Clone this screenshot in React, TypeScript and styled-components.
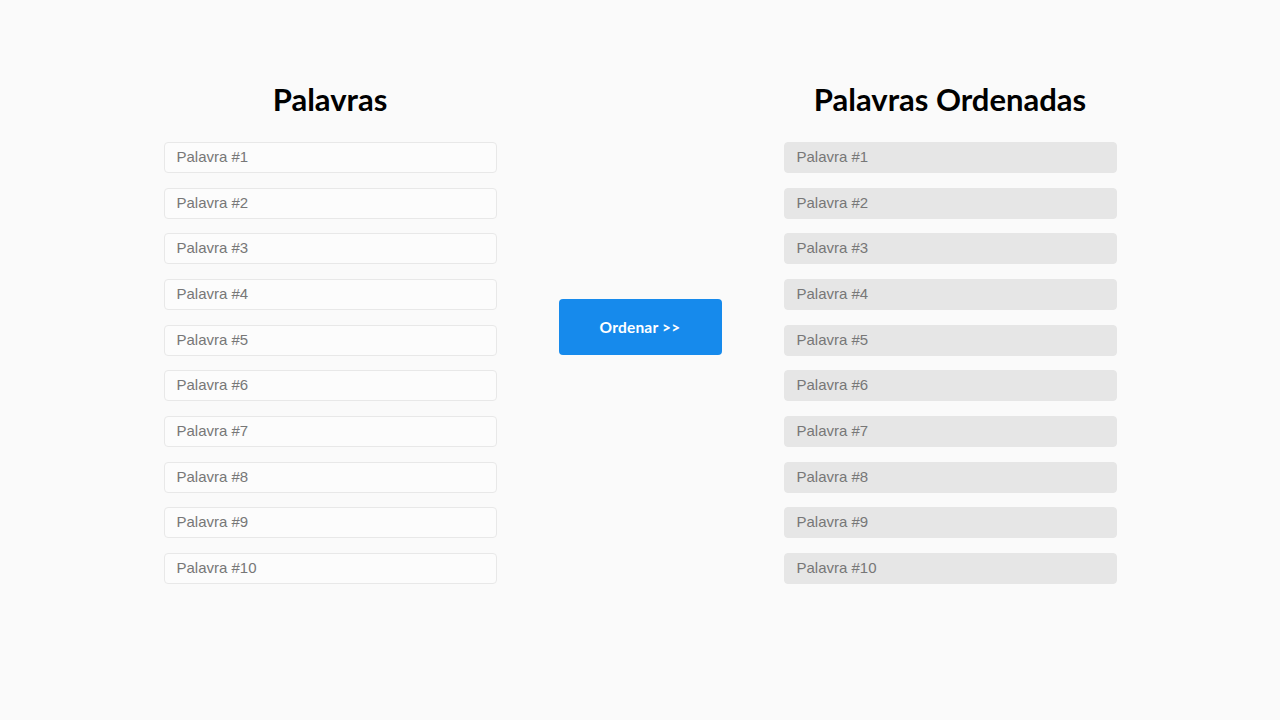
import React from "react";
import styled, { createGlobalStyle } from "styled-components";

const GlobalStyle = createGlobalStyle`
  html, body {
    margin: 0;
    padding: 0;
    background: #fafafa;
  }
  * { box-sizing: border-box; }
`;

const Page = styled.main`
  min-height: 720px;
  display: flex;
  justify-content: center;
  align-items: flex-start;
  gap: 62px;
  padding-top: 81px;
  background: #fafafa;
`;

const Column = styled.section`
  width: 333px;
  display: flex;
  flex-direction: column;
`;

const Heading = styled.h1`
  margin: 0 0 23.8px;
  font-family: Lato, "Noto Sans", sans-serif;
  font-weight: 700;
  font-size: 31px;
  line-height: 37.2px;
  color: #000;
  text-align: center;
`;

const List = styled.div`
  display: flex;
  flex-direction: column;
  gap: 14.67px;
`;

const WordInput = styled.input<{ $readOnlyLook?: boolean }>`
  width: 100%;
  height: 31px;
  padding: 0 12px 2px;
  border-radius: 4px;
  border: 1px solid ${(p) => (p.$readOnlyLook ? "#e6e6e6" : "#e8e8e8")};
  background: ${(p) => (p.$readOnlyLook ? "#e6e6e6" : "#fcfcfc")};
  font-family: "Liberation Sans", Arial, sans-serif;
  font-size: 15px;
  color: #555;
  outline: none;

  &::placeholder {
    color: #777;
  }
`;

const Middle = styled.div`
  width: 163px;
  padding-top: 218px;
`;

const SortButton = styled.button`
  width: 163px;
  height: 56px;
  border: none;
  border-radius: 4px;
  background: #168aec;
  color: #fff;
  font-family: Lato, "Noto Sans", sans-serif;
  font-weight: 700;
  font-size: 15.5px;
  letter-spacing: 0.2px;
  cursor: pointer;
`;

const items = Array.from({ length: 10 }, (_, i) => `Palavra #${i + 1}`);

export default function App() {
  return (
    <>
      <GlobalStyle />
      <Page>
        <Column>
          <Heading>Palavras</Heading>
          <List>
            {items.map((p) => (
              <WordInput key={p} placeholder={p} />
            ))}
          </List>
        </Column>
        <Middle>
          <SortButton>Ordenar &gt;&gt;</SortButton>
        </Middle>
        <Column>
          <Heading>Palavras Ordenadas</Heading>
          <List>
            {items.map((p) => (
              <WordInput key={p} placeholder={p} readOnly $readOnlyLook />
            ))}
          </List>
        </Column>
      </Page>
    </>
  );
}
